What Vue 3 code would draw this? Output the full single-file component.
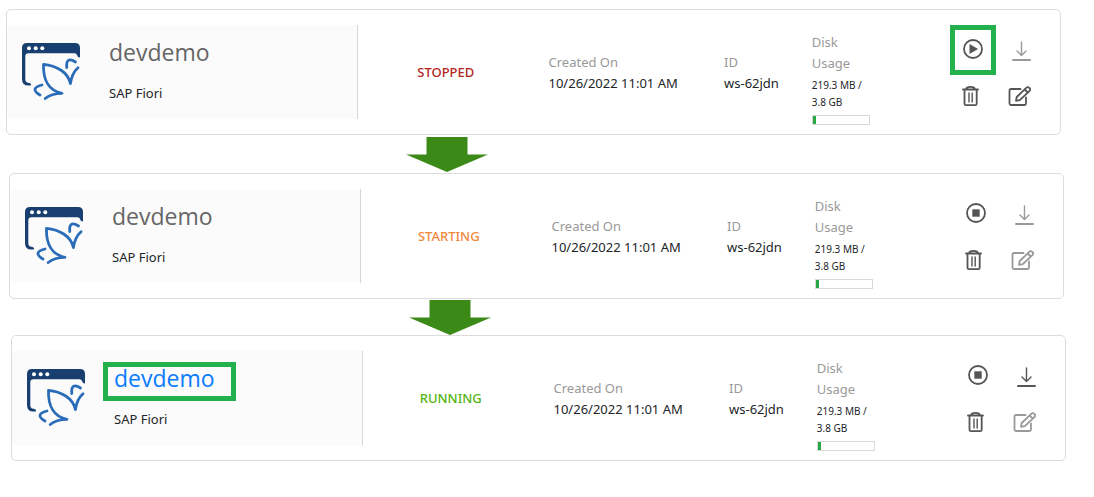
<script setup>
const details = {
  name: 'devdemo',
  kind: 'SAP Fiori',
  created: '10/26/2022 11:01 AM',
  id: 'ws-62jdn',
  used: '219.3 MB',
  total: '3.8 GB',
  percent: 5.6,
}

const spaces = [
  { ...details, status: 'stopped', canDownload: false, canEdit: true },
  { ...details, status: 'starting', canDownload: false, canEdit: false },
  { ...details, status: 'running', canDownload: true, canEdit: false },
]
</script>

<template>
  <main class="flow">
    <section v-for="(space, i) in spaces" :key="space.status" class="stage" :class="`is-${space.status}`">
      <article class="card">
        <div class="summary">
          <svg class="logo" viewBox="0 0 60 60" aria-hidden="true">
            <path
              class="logo-window"
              d="M5 1H53Q58 1 58 6V15.500Q55.500 15.500 55 13Q54.500 11.200 52.500 11.200H6.500Q3.300 11.200 3.300 14.500V37Q3.300 40.500 6.500 40.700Q9 40.500 9.300 43.300Q0 45 0 37V6Q0 1 5 1Z"
            />
            <g fill="#fff">
              <circle cx="7" cy="6.300" r="2" />
              <circle cx="13.700" cy="6.300" r="2" />
              <circle cx="20.300" cy="6.300" r="2" />
            </g>
            <g class="logo-bird">
              <path d="M56 25.700Q50 31 48.400 41.500C46 30 34 23.500 21.500 22.300C21 38 27 49 40 51.300Q29 51.500 23.200 56.500" />
              <path d="M20 43C11 45 11 49 18 53" />
              <path d="M53.500 20C47 16 44 18 44.800 25.500" />
            </g>
          </svg>
          <div class="titles">
            <h2 class="title">
              <a v-if="space.status === 'running'" class="title-link marked" href="#devdemo">{{ space.name }}</a>
              <template v-else>{{ space.name }}</template>
            </h2>
            <p class="kind">{{ space.kind }}</p>
          </div>
        </div>

        <div class="status">{{ space.status.toUpperCase() }}</div>

        <div class="field">
          <div class="label">Created On</div>
          <div>{{ space.created }}</div>
        </div>
        <div class="field">
          <div class="label">ID</div>
          <div>{{ space.id }}</div>
        </div>
        <div class="field disk">
          <div class="label">Disk Usage</div>
          <div class="usage">{{ space.used }} / {{ space.total }}</div>
          <div class="meter"><div class="meter-fill" :style="{ width: space.percent + '%' }"></div></div>
        </div>

        <div class="actions">
          <button v-if="space.status === 'stopped'" class="action marked" type="button" aria-label="Start">
            <svg viewBox="0 0 32 32">
              <circle cx="16" cy="17" r="9" />
              <path class="solid" d="M12.500 12L21 17L12.500 22Z" />
            </svg>
          </button>
          <button v-else class="action" type="button" aria-label="Stop">
            <svg viewBox="0 0 32 32">
              <circle cx="16" cy="17" r="9" />
              <path class="solid" d="M12.300 13.300H19.700V20.700H12.300Z" />
            </svg>
          </button>
          <button class="action" type="button" aria-label="Download" :disabled="!space.canDownload">
            <svg viewBox="0 0 32 32">
              <path class="thin" d="M16.500 10V23.500M12 19L16.500 23.500L21 19" />
              <path class="base" d="M8 28H25" />
            </svg>
          </button>
          <button class="action" type="button" aria-label="Delete">
            <svg viewBox="0 0 32 32">
              <path d="M6 9.500H21M9 9.300C9.500 6 17.500 6 18 9.300M7.500 9.500V23.700Q7.500 25.200 9 25.200H18.200Q19.700 25.200 19.700 23.700V9.500" />
              <path class="thin" d="M12 13V22M15.200 13V22" />
            </svg>
          </button>
          <button class="action" type="button" aria-label="Edit" :disabled="!space.canEdit">
            <svg viewBox="0 0 32 32">
              <path d="M15.500 9H6Q4.500 9 4.500 10.500V23.500Q4.500 25 6 25H19.500Q21 25 21 23.500V17.500" />
              <path d="M11 20.800L11.700 17L21.500 7.700Q22.800 6.500 24.200 7.800Q26 9.300 24.600 10.800L14.800 20.100ZM19.700 9.500L22.800 12.500" />
            </svg>
          </button>
        </div>
      </article>

      <div v-if="i < spaces.length - 1" class="next">
        <svg class="arrow" viewBox="0 0 82 35" aria-hidden="true">
          <path d="M20.500 0H61.500V17.500H82L41 35L0 17.500H20.500Z" />
        </svg>
      </div>
    </section>
  </main>
</template>

<style>
body {
  margin: 0;
  background: #fff;
}
</style>

<style scoped>
.flow {
  padding-top: 9px;
  font: 13px/21px "Noto Sans", "Open Sans", sans-serif;
  color: #212529;
}
.is-stopped {
  margin: 0 33px 0 6px;
  --status: #b3261e;
}
.is-starting {
  margin: 0 30px 0 9px;
  --status: #f0883a;
}
.is-running {
  margin: 0 28px 0 11px;
  --status: #54b412;
}
.card {
  display: grid;
  grid-template-columns: 4fr 2fr 2fr 1fr 1fr 2fr;
  align-items: center;
  border: 1px solid #dcdcdc;
  border-radius: 5px;
}
.card > * {
  min-width: 0;
}
.summary {
  display: flex;
  box-sizing: border-box;
  gap: 27px;
  height: 94px;
  margin: 15px 0;
  padding: 0 15px;
  background: #fbfbfb;
  border-right: 1px solid #d6d6d6;
  border-radius: 5px 0 0 5px;
}
.logo {
  flex: none;
  width: 60px;
  height: 60px;
  margin-top: 17px;
}
.logo-window {
  fill: #183f70;
}
.logo-bird {
  fill: none;
  stroke: #2a6cb8;
  stroke-width: 2.8;
  stroke-linecap: round;
  stroke-linejoin: round;
}
.titles {
  padding-top: 11px;
}
.title {
  margin: 0 0 15px;
  font-family: "Open Sans", "Noto Sans", sans-serif;
  font-size: 23px;
  line-height: 32px;
  font-weight: 400;
  color: #666;
}
.title-link {
  color: #0a7cff;
  text-decoration: none;
}
.kind {
  margin: 0;
}
.status {
  text-align: center;
  font-weight: 500;
  color: var(--status);
}
.field {
  padding: 1px 0 0 15px;
}
.label {
  color: #999;
}
.disk {
  padding: 13px 15px 0;
}
.usage {
  margin: 3px 0 4px;
  font-size: 10px;
  line-height: 17px;
}
.meter {
  height: 8px;
  border: 1px solid #d9d9d9;
}
.meter-fill {
  height: 100%;
  background: #28a745;
}
.actions {
  display: grid;
  grid-template-columns: 48px 48px;
  justify-content: end;
  padding-right: 15px;
}
.action {
  display: grid;
  place-items: center;
  height: 48px;
  padding: 0;
  border: 0;
  background: none;
  color: #555;
}
.action:disabled {
  color: #999;
}
.action svg {
  width: 32px;
  height: 32px;
  fill: none;
  stroke: currentColor;
  stroke-width: 1.8;
  stroke-linejoin: round;
  stroke-linecap: round;
}
.action .solid {
  fill: currentColor;
  stroke: none;
}
.action .thin {
  stroke-width: 1.4;
}
.action .base {
  stroke-width: 2;
}
.marked {
  position: relative;
}
.marked::after {
  content: "";
  position: absolute;
  box-sizing: border-box;
  border: 5px solid #22b14c;
}
.action.marked::after {
  inset: 1px 1px -3px;
}
.title-link.marked::after {
  inset: 0 -21px -7px -11px;
}
.next {
  width: 83.6%;
  padding: 2px 0 1px;
}
.is-starting .next {
  padding: 1px 0 0;
}
.arrow {
  display: block;
  width: 82px;
  height: 35px;
  margin: 0 auto;
  fill: #3b8a18;
}
</style>
